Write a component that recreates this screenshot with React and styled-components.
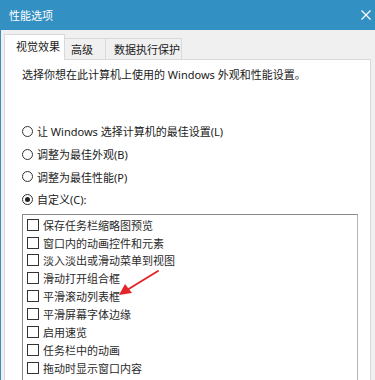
import React from "react";
import styled, { createGlobalStyle } from "styled-components";

const GlobalStyle = createGlobalStyle`
  html, body {
    margin: 0;
    padding: 0;
    background: #f0f0f0;
  }
  body {
    font-family: "Noto Sans", "Noto Sans CJK SC", sans-serif;
    font-size: 11px;
    color: #1a1a1a;
  }
`;

const Window = styled.div`
  position: relative;
  width: 375px;
  height: 380px;
  overflow: hidden;
  box-sizing: border-box;
  border-left: 1px solid #3a8fc0;
  background: #f0f0f0;
`;

const TitleBar = styled.div`
  height: 30px;
  background: #3390c3;
  color: #fff;
  display: flex;
  align-items: center;
  justify-content: space-between;
  padding: 0 4px 1px 8px;
  box-sizing: border-box;
  font-size: 11px;
`;

const CloseIcon = styled.svg`
  width: 10px;
  height: 10px;
`;

const Body = styled.div`
  padding: 4px 4px 0 3px;
`;

const TabStrip = styled.div`
  display: flex;
  align-items: flex-end;
  height: 26px;
  margin-bottom: -1px;
  position: relative;
  z-index: 1;
`;

const Tab = styled.div`
  box-sizing: border-box;
  width: ${(p) => p.$w}px;
  height: ${(p) => (p.$active ? 26 : 22)}px;
  background: ${(p) => (p.$active ? "#fff" : "#f0f0f0")};
  border: 1px solid #d9d9d9;
  border-bottom: ${(p) => (p.$active ? "none" : "1px solid #d9d9d9")};
  border-left: ${(p) => (p.$first || p.$active ? "1px solid #d9d9d9" : "none")};
  display: flex;
  align-items: center;
  padding-left: ${(p) => p.$pad}px;
  padding-bottom: ${(p) => (p.$active ? 3 : 0)}px;
  white-space: nowrap;
`;

const Panel = styled.div`
  box-sizing: border-box;
  width: 367px;
  height: 330px;
  background: #fff;
  border: 1px solid #d9d9d9;
  padding: 7px 0 0 17px;
`;

const Description = styled.div`
  line-height: 16px;
  margin-bottom: 37px;
`;

const RadioRow = styled.div`
  height: 22.7px;
  display: flex;
  align-items: center;
`;

const RadioCircle = styled.span`
  box-sizing: border-box;
  width: 11px;
  height: 11px;
  border: 1px solid #333;
  border-radius: 50%;
  margin-right: 4px;
  display: flex;
  align-items: center;
  justify-content: center;
  &::after {
    content: "";
    width: 5px;
    height: 5px;
    border-radius: 50%;
    background: ${(p) => (p.$checked ? "#222" : "transparent")};
  }
`;

const ListBox = styled.div`
  box-sizing: border-box;
  margin-top: 3px;
  width: 336px;
  height: 200px;
  border: 1px solid #8a8a8a;
  border-right-color: #b5b5b5;
  padding-top: 1px;
  color: #2a2a2a;
`;

const CheckRow = styled.div`
  height: 17.9px;
  display: flex;
  align-items: center;
  padding-left: 4px;
`;

const CheckBox = styled.span`
  box-sizing: border-box;
  width: 12px;
  height: 12px;
  border: 1px solid #333;
  margin-right: 4px;
  flex-shrink: 0;
`;

// red annotation arrow drawn over the list
const Arrow = styled.svg`
  position: absolute;
  left: 110px;
  top: 262px;
  width: 60px;
  height: 40px;
`;

const radios = [
  { label: "让 Windows 选择计算机的最佳设置(L)" },
  { label: "调整为最佳外观(B)" },
  { label: "调整为最佳性能(P)" },
  { label: "自定义(C):", checked: true },
];

const items = [
  "保存任务栏缩略图预览",
  "窗口内的动画控件和元素",
  "淡入淡出或滑动菜单到视图",
  "滑动打开组合框",
  "平滑滚动列表框",
  "平滑屏幕字体边缘",
  "启用速览",
  "任务栏中的动画",
  "拖动时显示窗口内容",
];

export default function App() {
  return (
    <>
      <GlobalStyle />
      <Window>
        <TitleBar>
          <span>性能选项</span>
          <CloseIcon viewBox="0 0 10 10">
            <path d="M0.5 0.5 L9.5 9.5 M9.5 0.5 L0.5 9.5" stroke="#fff" strokeWidth="1.2" />
          </CloseIcon>
        </TitleBar>
        <Body>
          <TabStrip>
            <Tab $active $first $w={61} $pad={11}>视觉效果</Tab>
            <Tab $w={41} $pad={6}>高级</Tab>
            <Tab $w={76} $pad={8}>数据执行保护</Tab>
          </TabStrip>
          <Panel>
            <Description>选择你想在此计算机上使用的 Windows 外观和性能设置。</Description>
            {radios.map((r) => (
              <RadioRow key={r.label}>
                <RadioCircle $checked={r.checked} />
                {r.label}
              </RadioRow>
            ))}
            <ListBox>
              {items.map((t) => (
                <CheckRow key={t}>
                  <CheckBox />
                  {t}
                </CheckRow>
              ))}
              <CheckRow>
                <CheckBox />
              </CheckRow>
            </ListBox>
          </Panel>
        </Body>
        <Arrow viewBox="0 0 60 40">
          <line x1="47" y1="9" x2="16" y2="28" stroke="#e3262a" strokeWidth="2" strokeLinecap="round" />
          <polygon points="8,33 14,22 21,31" fill="#e3262a" />
        </Arrow>
      </Window>
    </>
  );
}
